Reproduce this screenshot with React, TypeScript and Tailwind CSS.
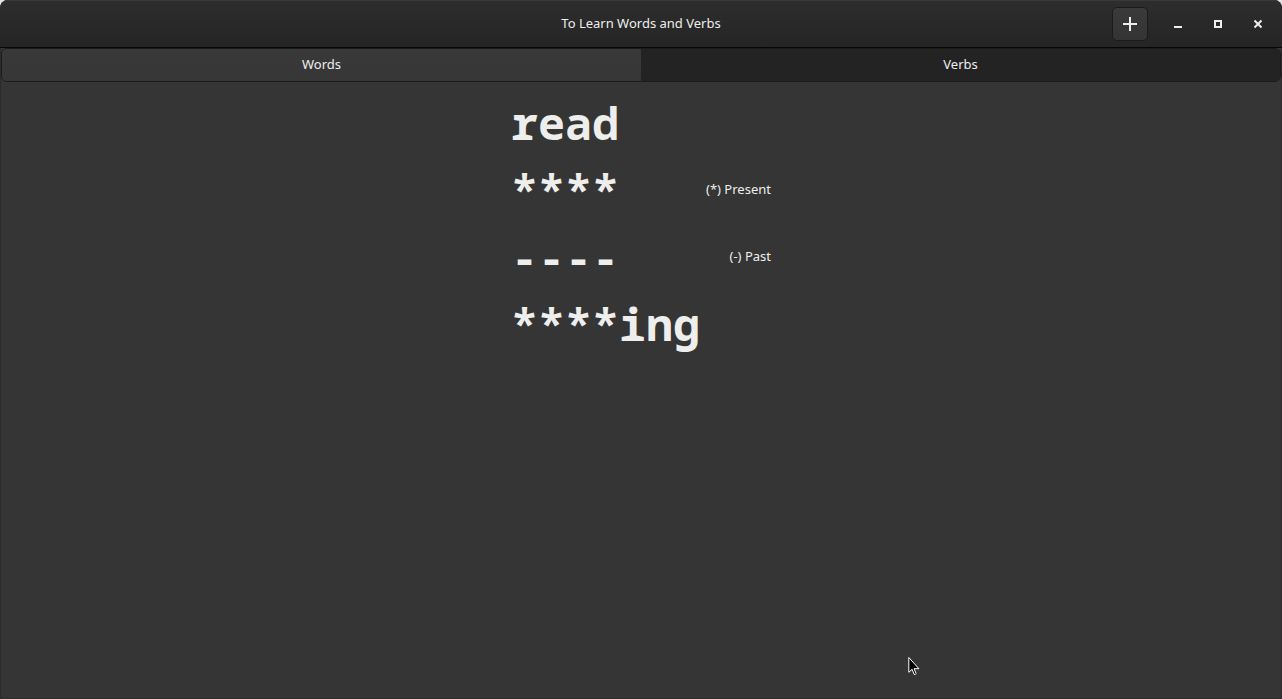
import { useState } from "react";

type Row = { word: string; label?: string };

const rows: Row[] = [
  { word: "read" },
  { word: "****", label: "(*) Present" },
  { word: "----", label: "(-) Past" },
  { word: "****ing" },
];

const tabs = ["Words", "Verbs"];

function HeaderBar() {
  return (
    <header className="grid h-12 grid-cols-[1fr_auto_1fr] items-center border-b border-[#070707] bg-linear-to-b from-[#2d2d2d] to-[#252525] shadow-[inset_0_1px_#393939]">
      <span />
      <h1 className="text-[13px] text-[#eeeeec]">To Learn Words and Verbs</h1>
      <div className="flex items-center justify-end pr-4">
        <button
          type="button"
          aria-label="Add"
          className="mr-[22px] grid h-[34px] w-9 place-items-center rounded-[5px] border border-[#1b1b1b] bg-linear-to-b from-[#3a3a3a] to-[#343434]"
        >
          <svg width="16" height="16" viewBox="0 0 16 16" fill="#eeeeec" shapeRendering="crispEdges">
            <path d="M7 1h2v6h6v2H9v6H7V9H1V7h6z" />
          </svg>
        </button>
        <div className="flex gap-6">
          <button type="button" aria-label="Minimize" className="block">
            <svg width="16" height="16" viewBox="0 0 16 16" fill="#eeeeec">
              <path d="M4 10h8v2H4z" />
            </svg>
          </button>
          <button type="button" aria-label="Maximize" className="block">
            <svg width="16" height="16" viewBox="0 0 16 16" fill="#eeeeec">
              <path fillRule="evenodd" d="M4 4h8v8H4zM6 6v4h4V6z" />
            </svg>
          </button>
          <button type="button" aria-label="Close" className="block">
            <svg width="16" height="16" viewBox="0 0 16 16" stroke="#eeeeec" strokeWidth="2">
              <path d="M4.5 4.5l7 7M11.5 4.5l-7 7" />
            </svg>
          </button>
        </div>
      </div>
    </header>
  );
}

export default function App() {
  const [active, setActive] = useState("Verbs");

  return (
    <div className="min-h-screen bg-[#e4e4e4] font-['Noto_Sans',sans-serif]">
      <div className="relative flex min-h-screen flex-col overflow-hidden rounded-t-lg bg-[#353535] text-[#eeeeec]">
        <HeaderBar />
        <main className="flex flex-1 flex-col border-x border-b border-[#2b2b2b]">
          <div role="tablist" className="flex h-[34px] overflow-hidden rounded-md border border-[#1b1b1b]">
            {tabs.map((tab) => (
              <button
                key={tab}
                type="button"
                role="tab"
                aria-selected={active === tab}
                onClick={() => setActive(tab)}
                className={
                  active === tab
                    ? "flex-1 bg-[#232323] text-[13px]"
                    : "flex-1 bg-linear-to-b from-[#393939] to-[#363636] text-[13px]"
                }
              >
                {tab}
              </button>
            ))}
          </div>
          <dl className="grid grid-cols-[auto_auto] items-center justify-center gap-1.5 pt-2.5">
            {rows.map((row) => (
              <div key={row.word} className="contents">
                <dt className="font-['Noto_Sans_Mono','DejaVu_Sans_Mono',monospace] text-[45px] leading-[61px] font-bold">
                  {row.word}
                </dt>
                <dd className="text-right text-[13px]">{row.label}</dd>
              </div>
            ))}
          </dl>
        </main>
        <svg
          aria-hidden="true"
          className="absolute top-[656px] left-[908px]"
          width="12"
          height="20"
          viewBox="0 0 12 20"
          fill="#000"
          stroke="#fff"
        >
          <path d="M.8 1.500v14.800l3.300-3 2 5q1 1 2-.7l-2-4.900h4.800z" />
        </svg>
      </div>
    </div>
  );
}
